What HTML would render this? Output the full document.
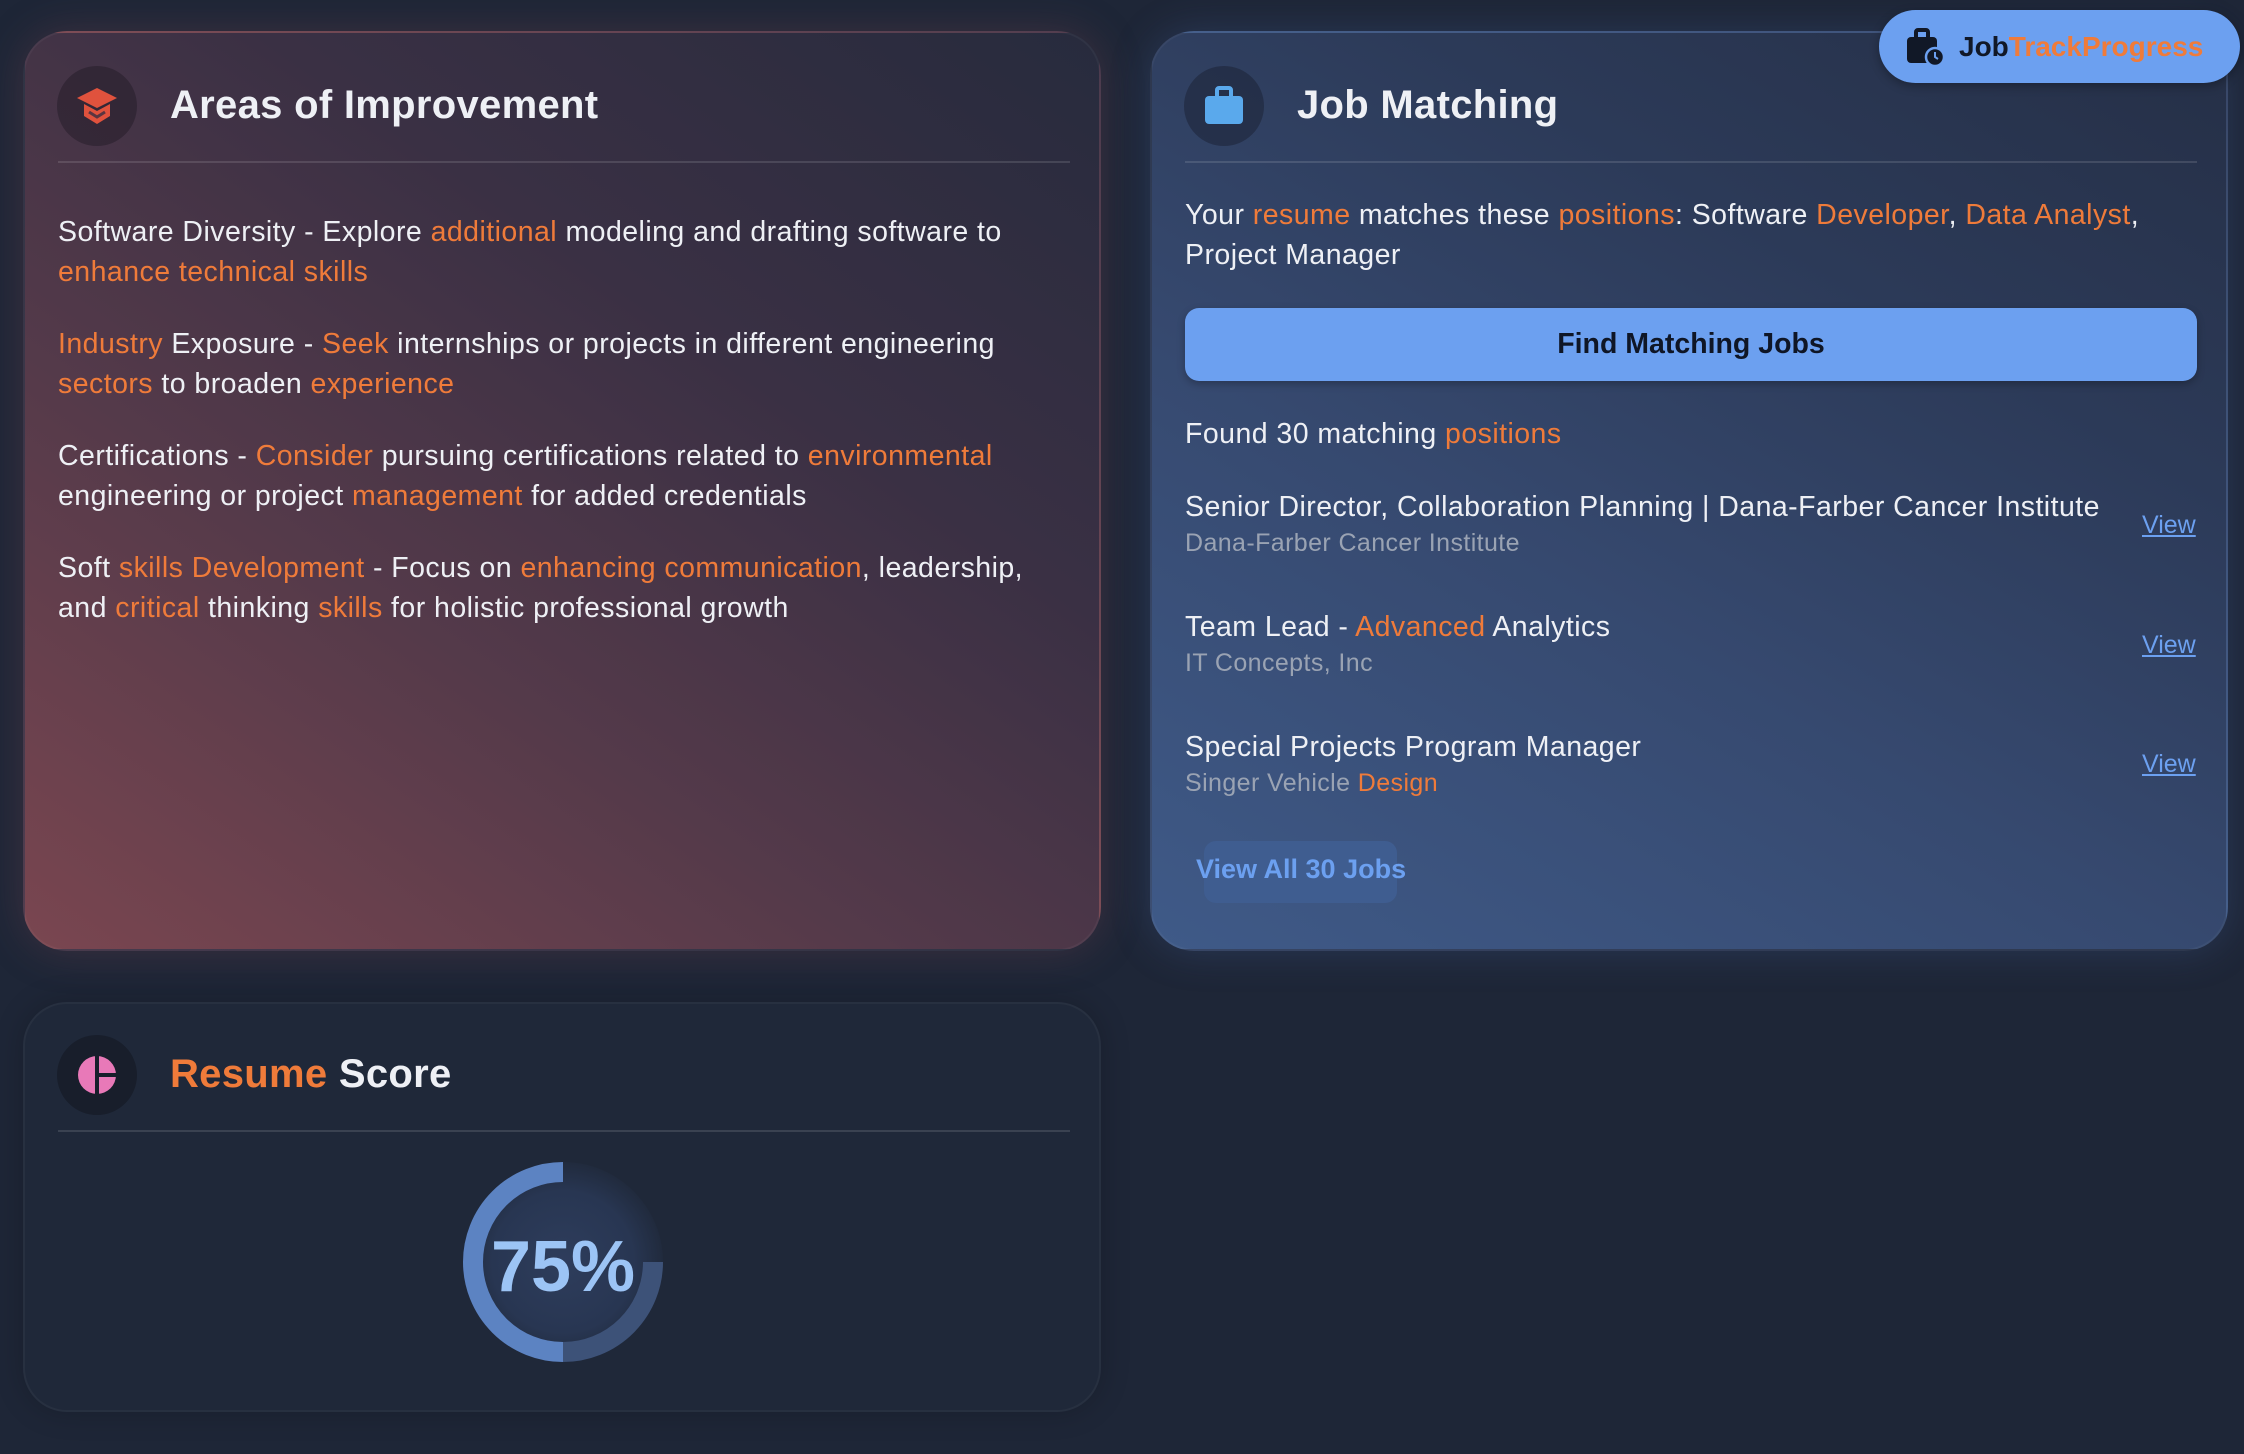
<!DOCTYPE html>
<html><head><meta charset="utf-8"><style>
*{box-sizing:border-box;margin:0;padding:0}
body{width:2244px;height:1454px;background:#1e2637;font-family:"Liberation Sans",sans-serif;color:#eef0f5;position:relative;overflow:hidden}
.card{position:absolute;border-radius:44px;border:2px solid rgba(255,255,255,0.04)}
.o{color:#ef7b3a}
.icon{position:absolute;width:80px;height:80px;border-radius:50%;display:flex;align-items:center;justify-content:center}
.title{position:absolute;font-size:40px;font-weight:bold;letter-spacing:0.3px}
.div{position:absolute;height:2px;background:rgba(255,255,255,0.12)}
p{font-size:28.5px;line-height:40px;letter-spacing:0.45px}
</style></head><body>

<div class="card" style="left:23px;top:31px;width:1078px;height:920px;background:linear-gradient(35deg,#7a4650 0%,#553a4a 35%,#3a3044 65%,#272b3d 100%);box-shadow:0 0 40px rgba(120,70,80,0.35)">
  <div class="icon" style="left:32px;top:33px;background:rgba(30,25,35,0.45)">
    <svg width="44" height="40" viewBox="0 0 44 40"><path d="M22 2 L42 12 L22 22 L2 12 Z" fill="#e0523d"/><path d="M9 18 L9 30 L22 38 L35 30 L35 18 L22 25 Z" fill="#e0523d"/><path d="M14 26 L22 31 L30 26" stroke="#5a3540" stroke-width="3" fill="none"/></svg>
  </div>
  <div class="title" style="left:145px;top:50px">Areas of Improvement</div>
  <div class="div" style="left:33px;top:128px;width:1012px"></div>
  <div style="position:absolute;left:33px;top:179px;width:1020px">
    <p style="margin-bottom:32px">Software Diversity - Explore <span class="o">additional</span> modeling and drafting software to <span class="o">enhance technical skills</span></p>
    <p style="margin-bottom:32px"><span class="o">Industry</span> Exposure - <span class="o">Seek</span> internships or projects in different engineering <span class="o">sectors</span> to broaden <span class="o">experience</span></p>
    <p style="margin-bottom:32px">Certifications - <span class="o">Consider</span> pursuing certifications related to <span class="o">environmental</span> engineering or project <span class="o">management</span> for added credentials</p>
    <p>Soft <span class="o">skills Development</span> - Focus on <span class="o">enhancing communication</span>, leadership, and <span class="o">critical</span> thinking <span class="o">skills</span> for holistic professional growth</p>
  </div>
</div>

<div class="card" style="left:1150px;top:31px;width:1078px;height:920px;background:linear-gradient(30deg,#3f5a88 0%,#36496f 40%,#2c3a58 70%,#252f46 100%);box-shadow:0 0 40px rgba(70,100,160,0.3)">
  <div class="icon" style="left:32px;top:33px;background:rgba(25,32,50,0.5)">
    <svg width="42" height="40" viewBox="0 0 42 40"><rect x="14" y="2" width="14" height="10" rx="2" fill="none" stroke="#5aa9ec" stroke-width="4"/><rect x="2" y="10" width="38" height="28" rx="4" fill="#5aa9ec"/></svg>
  </div>
  <div class="title" style="left:145px;top:50px">Job Matching</div>
  <div class="div" style="left:33px;top:128px;width:1012px"></div>
  <p style="position:absolute;left:33px;top:162px;width:1015px">Your <span class="o">resume</span> matches these <span class="o">positions</span>: Software <span class="o">Developer</span>, <span class="o">Data Analyst</span>, Project Manager</p>
  <div style="position:absolute;left:33px;top:275px;width:1012px;height:73px;border-radius:14px;background:#6ca0f0;color:#0f1626;font-size:28.5px;font-weight:bold;display:flex;align-items:center;justify-content:center;box-shadow:0 3px 8px rgba(0,0,0,0.25)">Find Matching Jobs</div>
  <p style="position:absolute;left:33px;top:381px">Found 30 matching <span class="o">positions</span></p>
  <p style="position:absolute;left:33px;top:454px">Senior Director, Collaboration Planning | Dana-Farber Cancer Institute</p>
  <div style="position:absolute;left:33px;top:496px;font-size:25px;color:#9aa3b3;letter-spacing:0.4px">Dana-Farber Cancer Institute</div>
  <div style="position:absolute;left:990px;top:478px;font-size:25px;color:#6ca0f0;text-decoration:underline">View</div>
  <p style="position:absolute;left:33px;top:574px">Team Lead - <span class="o">Advanced</span> Analytics</p>
  <div style="position:absolute;left:33px;top:616px;font-size:25px;color:#9aa3b3;letter-spacing:0.4px">IT Concepts, Inc</div>
  <div style="position:absolute;left:990px;top:598px;font-size:25px;color:#6ca0f0;text-decoration:underline">View</div>
  <p style="position:absolute;left:33px;top:694px">Special Projects Program Manager</p>
  <div style="position:absolute;left:33px;top:736px;font-size:25px;color:#9aa3b3;letter-spacing:0.4px">Singer Vehicle <span class="o">Design</span></div>
  <div style="position:absolute;left:990px;top:717px;font-size:25px;color:#6ca0f0;text-decoration:underline">View</div>
  <div style="position:absolute;left:52px;top:808px;width:193px;height:62px;border-radius:12px;background:#3f5d90"></div>
  <div style="position:absolute;left:44px;top:821px;font-size:27px;font-weight:bold;color:#6ca0f0">View All 30 Jobs</div>
</div>

<div style="position:absolute;left:1879px;top:10px;width:361px;height:73px;border-radius:37px;background:#6ca0f0;display:flex;align-items:center;padding-left:26px;box-shadow:0 3px 10px rgba(0,0,0,0.3)">
  <svg width="40" height="40" viewBox="0 0 40 40"><rect x="11" y="3" width="12" height="9" rx="2" fill="none" stroke="#111827" stroke-width="4"/><rect x="2" y="10" width="30" height="26" rx="4" fill="#111827"/><circle cx="30" cy="30" r="9" fill="#111827" stroke="#6ca0f0" stroke-width="2.5"/><path d="M30 25 V30 L33 32" stroke="#6ca0f0" stroke-width="2" fill="none"/></svg>
  <span style="font-size:28px;font-weight:bold;color:#111827;margin-left:14px">Job</span><span style="font-size:28px;font-weight:bold;color:#ef7b3a">TrackProgress</span>
</div>

<div class="card" style="left:23px;top:1002px;width:1078px;height:410px;background:#1f2839;box-shadow:0 0 30px rgba(0,0,0,0.2)">
  <div class="icon" style="left:32px;top:31px;background:#181e2b">
    <svg width="40" height="40" viewBox="0 0 40 40"><circle cx="20" cy="20" r="19" fill="#e879b8"/><path d="M20 0 V40 M20 20 H40" stroke="#181e2b" stroke-width="4"/></svg>
  </div>
  <div class="title" style="left:145px;top:48px"><span class="o">Resume</span> Score</div>
  <div class="div" style="left:33px;top:126px;width:1012px"></div>
  <div style="position:absolute;left:438px;top:158px;width:200px;height:200px;border-radius:50%;background:radial-gradient(circle,#2e3d5c 0%,#283652 50%,#1f2839 75%)"></div>
  <svg style="position:absolute;left:438px;top:158px" width="200" height="200" viewBox="0 0 200 200">
    <path d="M100 190 A90 90 0 0 0 190 100" fill="none" stroke="#3d5278" stroke-width="20"/>
    <path d="M100 10 A90 90 0 0 0 100 190" fill="none" stroke="#5c83c2" stroke-width="20"/>
  </svg>
  <div style="position:absolute;left:438px;top:222px;width:200px;text-align:center;font-size:72px;font-weight:bold;color:#9cc4f5">75%</div>
</div>
</body></html>
